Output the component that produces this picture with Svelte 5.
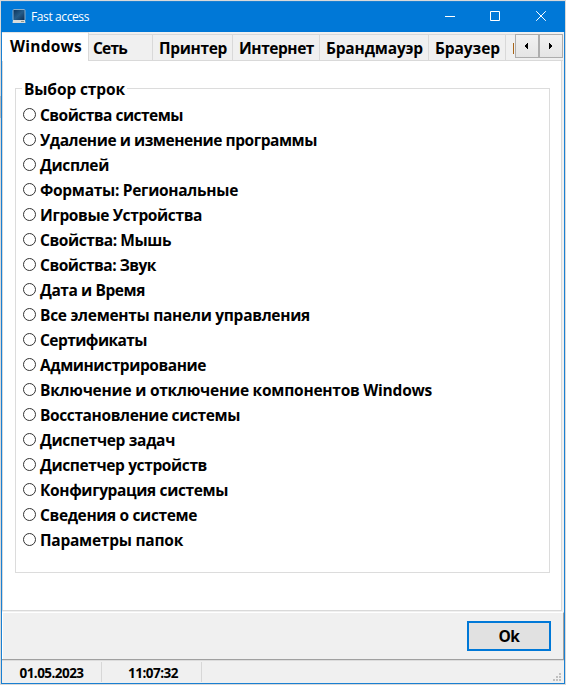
<script>
  const tabs = [
    { label: 'Сеть', width: 64, text: 34, pad: 4 },
    { label: 'Принтер', width: 80, text: 68, pad: 6 },
    { label: 'Интернет', width: 87, text: 75, pad: 6 },
    { label: 'Брандмауэр', width: 109, text: 97, pad: 6 },
    { label: 'Браузер', width: 77, text: 65, pad: 6 },
  ];
  const options = [
    ['Свойства системы', 143],
    ['Удаление и изменение программы', 277],
    ['Дисплей', 69],
    ['Форматы: Региональные', 198],
    ['Игровые Устройства', 162],
    ['Свойства: Мышь', 131],
    ['Свойства: Звук', 116],
    ['Дата и Время', 105],
    ['Все элементы панели управления', 270],
    ['Сертификаты', 107],
    ['Администрирование', 166],
    ['Включение и отключение компонентов Windows', 392],
    ['Восстановление системы', 200],
    ['Диспетчер задач', 135],
    ['Диспетчер устройств', 167],
    ['Конфигурация системы', 188],
    ['Сведения о системе', 157],
    ['Параметры папок', 143],
  ];

  function fit(node, width) {
    const natural = node.getBoundingClientRect().width;
    node.style.letterSpacing = `${(width - natural) / node.textContent.length}px`;
  }
</script>

<div class="desktop">
  <div class="window">
    <header>
      <svg class="logo" width="14" height="15" viewBox="0 0 14 15">
        <defs>
          <linearGradient id="scr" x1="0" y1="0" x2="1" y2="1">
            <stop offset="0" stop-color="#0c3157" /><stop offset=".5" stop-color="#265c88" /><stop offset="1" stop-color="#0b2b50" />
          </linearGradient>
        </defs>
        <rect x="1" y="0.5" width="12" height="11" rx="1" fill="url(#scr)" stroke="#8eafc8" />
        <path d="M1 11H13L13.500 14H0.500Z" fill="#d9dcda" />
        <path d="M9 12.500H12" stroke="#8a9690" />
      </svg>
      <span class="title" use:fit={58}>Fast access</span>
      <svg class="controls" width="138" height="30" viewBox="0 0 138 30" fill="none" stroke="#fff">
        <path d="M18 14.500H28M63.500 9.500H72.500V18.500H63.500ZM109.200 9.200L118.800 18.800M118.800 9.200L109.200 18.800" />
      </svg>
    </header>

    <nav>
      <div class="tab active"><span use:fit={72}>Windows</span></div>
      {#each tabs as tab}
        <div class="tab" style:width="{tab.width}px" style:padding-left="{tab.pad}px"><span use:fit={tab.text}>{tab.label}</span></div>
      {/each}
      <div class="tab cut"><i></i></div>
      <div class="scroller">
        <button aria-label="Назад"><svg width="4" height="6" viewBox="0 0 4 6" shape-rendering="crispEdges"><path d="M3 0V6H2V5H1V4H0V2H1V1H2V0Z" /></svg></button>
        <button aria-label="Вперёд"><svg width="4" height="6" viewBox="0 0 4 6" shape-rendering="crispEdges"><path d="M0 0V6H1V5H2V4H3V2H2V1H1V0Z" /></svg></button>
      </div>
    </nav>

    <main>
      <section>
        <h2><span use:fit={101}>Выбор строк</span></h2>
        {#each options as [label, width]}
          <div class="option">
            <svg width="13" height="13" viewBox="0 0 13 13"><circle cx="6.500" cy="6.500" r="6" fill="#fff" stroke="#333" /></svg>
            <span use:fit={width}>{label}</span>
          </div>
        {/each}
      </section>
    </main>

    <div class="actions"><button class="ok"><span use:fit={21}>Ok</span></button></div>

    <footer>
      <div class="cell"><span use:fit={64}>01.05.2023</span></div>
      <div class="cell time"><span use:fit={50}>11:07:32</span></div>
      <svg class="grip" width="8" height="8" viewBox="0 0 8 8" fill="#bfbfbf" shape-rendering="crispEdges">
        <path d="M6 0h2v2h-2zM3 3h2v2h-2zM6 3h2v2h-2zM0 6h2v2h-2zM3 6h2v2h-2zM6 6h2v2h-2z" />
      </svg>
    </footer>
  </div>
</div>

<style>
  .desktop, .desktop * { box-sizing: border-box; }
  .desktop {
    width: 566px; height: 685px; padding: 1px;
    background: linear-gradient(#b8b8b8, #b8b8b8) 0 96px / 1px 22px no-repeat, #d9d9d9;
    font: bold 15.5px/20px "Open Sans", "Noto Sans", sans-serif;
    color: #000; white-space: nowrap; overflow: hidden;
  }
  span { display: inline-block; flex: none; }
  .window {
    width: 564px; height: 683px; border: 1px solid #1a80d2; background: #f0f0f0;
    display: flex; flex-direction: column;
  }
  header { height: 30px; flex: none; background: #0078d7; display: flex; margin: 0 -1px; padding-left: 11px; }
  .logo { margin-top: 7px; }
  .title { font-size: 12px; font-weight: 400; line-height: 16px; color: #fff; margin: 7px 0 0 5px; }
  .controls { margin-left: auto; margin-right: 0; }
  nav { height: 29px; flex: none; display: flex; align-items: flex-end; }
  .tab { height: 27px; flex: none; border: 1px solid #d9d9d9; border-left: 0; padding-top: 3px; background: #f0f0f0; }
  .tab.active { height: 29px; width: 87px; background: #fff; border-bottom: 0; border-top-color: #e5e5e5; padding: 3px 0 0 8px; }
  .tab.cut { width: 9px; border-right: 0; padding: 8px 0 0 7px; }
  .cut i { display: block; width: 1px; height: 11px; background: #a86518; }
  .scroller { display: flex; height: 27px; flex: 1; border-bottom: 1px solid #d9d9d9; margin-right: 2px; }
  .scroller button {
    width: 24px; height: 24px; flex: none; padding: 0 1px 1px 0; border: 1px solid #adadad;
    background: linear-gradient(#f1f1f1, #e5e5e5); display: flex; align-items: center; justify-content: center;
  }
  main {
    height: 550px; flex: none; background: #fff; border: 1px solid #d9d9d9; border-top: 0;
    margin-right: 2px; padding: 27px 11px 0 12px;
  }
  section { height: 485px; border: 1px solid #dcdcdc; padding: 0 0 0 7px; }
  h2 { font: inherit; height: 14px; margin: 0; display: flex; }
  h2 span { background: #fff; height: 20px; margin-top: -10px; box-shadow: -2px 0 #fff, 2px 0 #fff; margin-left: 1px; }
  .option { height: 25px; display: flex; align-items: flex-start; }
  .option svg { margin-top: 5px; flex: none; }
  .option span { margin: 2px 0 0 4px; }
  .actions {
    height: 47px; flex: none; border-top: 1px solid #fff; margin-top: 1px; padding: 8px 12px 0 0;
    display: flex; justify-content: flex-end; border-right: 1px solid #a0a0a0; border-left: 1px solid #fff;
  }
  .ok {
    width: 84px; height: 30px; padding: 0; background: #e1e1e1; border: 2px solid #0078d7;
    font: inherit; color: inherit; line-height: 24px;
  }
  footer { flex: 1; min-height: 0; border-top: 1px solid #a0a0a0; box-shadow: inset 0 1px #dcdcdc; display: flex; padding: 2px 2px 1px 0; }
  .cell { width: 100px; border-right: 1px solid #d7d7d7; text-align: center; font-size: 13.5px; line-height: 22px; }
  .cell:first-child { width: 100px; }
  .time { padding-left: 3px; }
  .grip { margin: auto 1px 1px auto; }
</style>
